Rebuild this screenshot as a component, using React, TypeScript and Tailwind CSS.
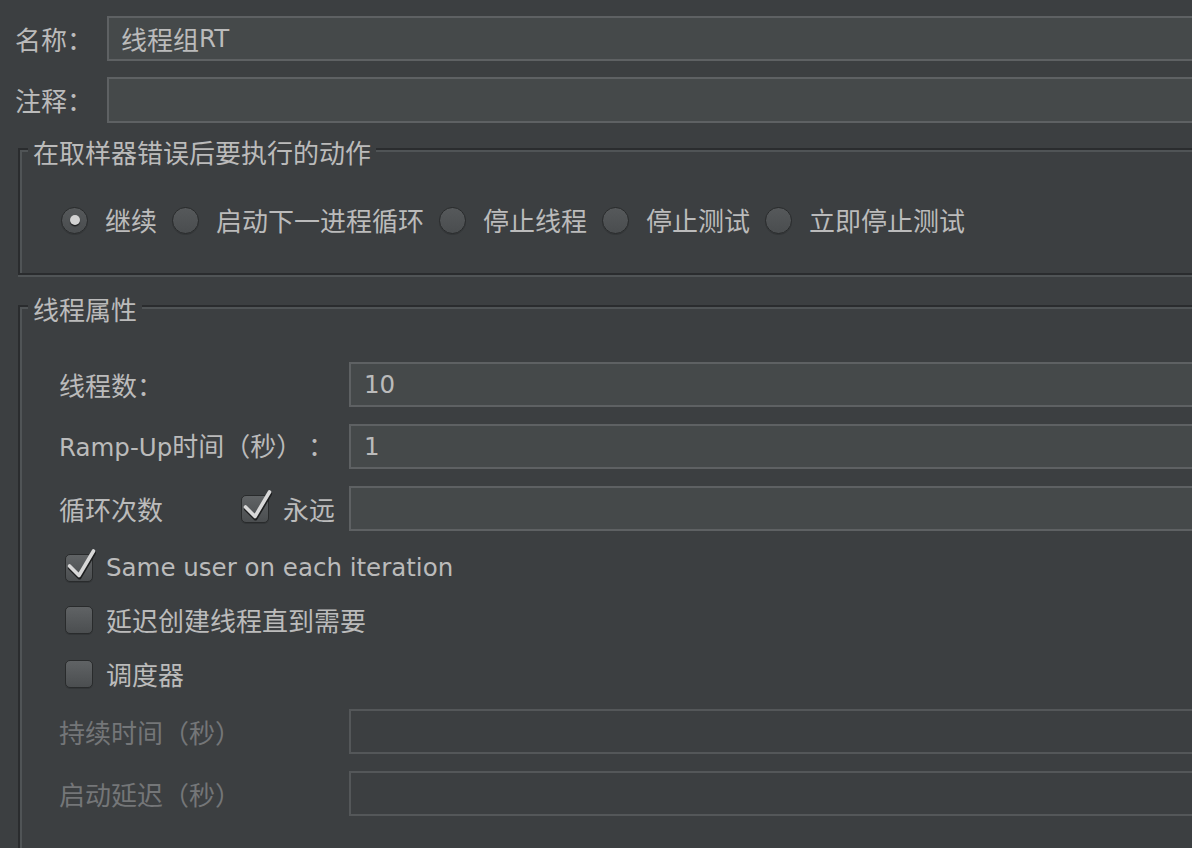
import React from 'react';

const CJK = "font-['Noto_Sans_CJK_SC',sans-serif] text-[26px] leading-[30px]";
const LAT = "font-['DejaVu_Sans','Noto_Sans_CJK_SC',sans-serif] text-[24.5px] leading-[30px]";

function Radio({ checked = false }: { checked?: boolean }) {
  return (
    <span className="flex h-[27px] w-[27px] shrink-0 items-center justify-center rounded-full border border-[#292b2c] bg-linear-to-b from-[#56595b] to-[#4a4d4f] shadow-[0_1px_0_#333638]">
      {checked && <span className="h-[10px] w-[10px] rounded-full bg-[#d2d2d2] shadow-[0_1.5px_1px_#1f2021]" />}
    </span>
  );
}

function Check({ checked = false }: { checked?: boolean }) {
  return (
    <span className="relative h-[28px] w-[28px] shrink-0 rounded-[5px] border border-[#292b2c] bg-linear-to-b from-[#606365] to-[#4b4e50] shadow-[0_1px_0_#333638]">
      {checked && (
        <svg className="absolute left-[-1px] top-[-9px] overflow-visible" width="32" height="40" viewBox="0 0 32 40">
          <path d="M4.5 20 L14 29.5 L28.5 5" stroke="#1d1e1f" strokeWidth="4" fill="none" strokeLinecap="round" strokeLinejoin="round" transform="translate(0.5,2)" />
          <path d="M4.5 20 L14 29.5 L28.5 5" stroke="#d8d8d8" strokeWidth="3.6" fill="none" strokeLinecap="round" strokeLinejoin="round" />
        </svg>
      )}
    </span>
  );
}

function Field({ value, disabled = false, latin = true }: { value?: string; disabled?: boolean; latin?: boolean }) {
  return (
    <div
      className={`flex h-[45px] flex-1 items-center border-2 px-[13px] ${
        disabled ? 'border-[#545759] bg-transparent' : 'border-[#5e6163] bg-[#45494a]'
      }`}
    >
      {value && <span className={latin ? LAT : CJK}>{value}</span>}
    </div>
  );
}

function Group({ title, children }: { title: string; children: React.ReactNode }) {
  return (
    <div className="relative ml-[3px] border-b-2 border-r-2 border-[#505456]">
      <div className="border-2 border-[#2a2c2e]">
        <div className="border-l-2 border-t-2 border-[#505456]">{children}</div>
      </div>
      <span className={`absolute left-[10px] top-[-11px] bg-[#3c3f41] px-[5px] ${CJK}`}>{title}</span>
    </div>
  );
}

export default function App() {
  const radios = ['继续', '启动下一进程循环', '停止线程', '停止测试', '立即停止测试'];

  return (
    <div className="h-[848px] w-[1192px] overflow-hidden bg-[#3c3f41] text-[#bbbbbb]">
      <div className="w-[1240px] pl-[15px] pt-[16px]">
        {/* Name / comment */}
        <div className="flex items-center">
          <span className={`w-[92px] ${CJK}`}>名称：</span>
          <div className="flex h-[45px] flex-1 items-center border-2 border-[#5e6163] bg-[#45494a] pl-[12px]">
            <span className={CJK}>线程组</span>
            <span className={LAT}>RT</span>
          </div>
        </div>
        <div className="mt-[16px] flex items-center">
          <span className={`w-[92px] ${CJK}`}>注释：</span>
          <div className="h-[46px] flex-1 border-2 border-[#5e6163] bg-[#45494a]" />
        </div>

        {/* Sampler error action */}
        <div className="mt-[25px]">
          <Group title="在取样器错误后要执行的动作">
            <div className="flex h-[121px] items-center pl-[39px] pt-[15px]">
              {radios.map((r, i) => (
                <div key={r} className="mr-[15px] flex items-center">
                  <Radio checked={i === 0} />
                  <span className={`ml-[17px] ${CJK}`}>{r}</span>
                </div>
              ))}
            </div>
          </Group>
        </div>

        {/* Thread properties */}
        <div className="mt-[28px]">
          <Group title="线程属性">
            <div className="pl-[37px] pt-[53px] pb-[40px]">
              <div className="flex items-center">
                <span className={`w-[290px] ${CJK}`}>线程数：</span>
                <Field value="10" />
              </div>
              <div className="mt-[17px] flex items-center">
                <span className="w-[290px]">
                  <span className={LAT}>Ramp-Up</span>
                  <span className={CJK}>时间（秒）&nbsp;：</span>
                </span>
                <Field value="1" />
              </div>
              <div className="mt-[17px] flex items-center">
                <div className="flex w-[290px] items-center">
                  <span className={`w-[182px] ${CJK}`}>循环次数</span>
                  <Check checked />
                  <span className={`ml-[14px] ${CJK}`}>永远</span>
                </div>
                <Field />
              </div>
              <div className="mt-[14px] flex h-[45px] items-center pl-[6px]">
                <Check checked />
                <span className={`ml-[13px] ${LAT}`}>Same user on each iteration</span>
              </div>
              <div className="mt-[7px] flex h-[45px] items-center pl-[6px]">
                <Check />
                <span className={`ml-[13px] ${CJK}`}>延迟创建线程直到需要</span>
              </div>
              <div className="mt-[9px] flex h-[45px] items-center pl-[6px]">
                <Check />
                <span className={`ml-[13px] ${CJK}`}>调度器</span>
              </div>
              <div className="mt-[13px] flex items-center">
                <span className={`w-[290px] text-[#747678] ${CJK}`}>持续时间（秒）</span>
                <Field disabled />
              </div>
              <div className="mt-[17px] flex items-center">
                <span className={`w-[290px] text-[#747678] ${CJK}`}>启动延迟（秒）</span>
                <Field disabled />
              </div>
            </div>
          </Group>
        </div>
      </div>
    </div>
  );
}
